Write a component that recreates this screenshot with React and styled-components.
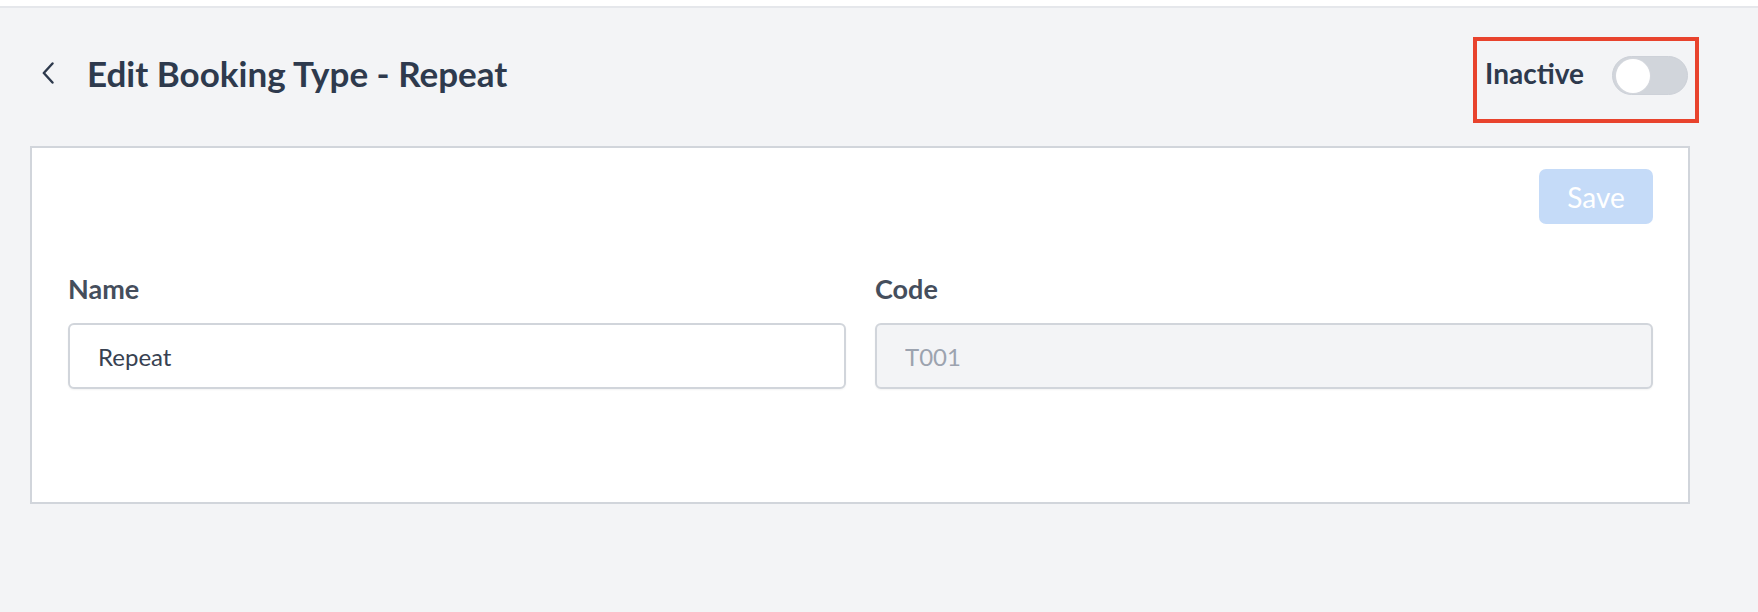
import React, { useState } from 'react';
import styled, { createGlobalStyle } from 'styled-components';

const GlobalStyle = createGlobalStyle`
  html, body {
    margin: 0;
    padding: 0;
    background: #f3f4f6;
    font-family: 'Lato', 'Noto Sans', sans-serif;
  }
  * {
    box-sizing: border-box;
  }
`;

const TopStrip = styled.div`
  height: 8px;
  background: #ffffff;
  border-bottom: 2px solid #e5e7eb;
`;

const Page = styled.div`
  padding: 0 68px 0 30px;
`;

const Header = styled.div`
  display: flex;
  justify-content: space-between;
  align-items: flex-start;
  margin-top: 29px;
  margin-right: -9px;
`;

const TitleGroup = styled.div`
  display: flex;
  align-items: center;
  height: 72px;
  padding-left: 12px;
  gap: 33px;
`;

const BackButton = styled.button`
  display: flex;
  align-items: center;
  padding: 0;
  border: 0;
  background: none;
  cursor: pointer;
  color: #2e3a4d;
`;

const Title = styled.h1`
  margin: 0;
  font-size: 35px;
  line-height: 40px;
  font-weight: 700;
  color: #2e3a4d;
`;

const StatusBox = styled.div`
  display: flex;
  align-items: flex-start;
  gap: 28px;
  padding: 15px 7px 24px 8px;
  border: 4px solid #e8432d;
`;

const StatusText = styled.span`
  font-size: 28px;
  line-height: 34px;
  font-weight: 700;
  color: #2e3a4d;
`;

const Track = styled.button`
  display: flex;
  align-items: center;
  width: 76px;
  height: 39px;
  padding: 0 0 0 3px;
  border: 1px solid #cdd1d8;
  border-radius: 20px;
  background: ${p => (p.on ? '#3b82f6' : '#d1d5db')};
  justify-content: ${p => (p.on ? 'flex-end' : 'flex-start')};
  cursor: pointer;
`;

const Knob = styled.span`
  width: 34px;
  height: 34px;
  border-radius: 50%;
  background: #ffffff;
  box-shadow: 0 0 0 1px #d4d7dd;
`;

const Card = styled.div`
  margin-top: 23px;
  background: #ffffff;
  border: 2px solid #d1d5db;
  padding: 21px 35px 113px 36px;
`;

const Actions = styled.div`
  display: flex;
  justify-content: flex-end;
`;

const SaveButton = styled.button`
  width: 114px;
  height: 55px;
  padding-top: 2px;
  border: 0;
  border-radius: 7px;
  background: #c5dbf8;
  color: #ffffff;
  font-family: 'Lato', 'Noto Sans', sans-serif;
  font-size: 28px;
  font-weight: 400;
  cursor: default;
`;

const Fields = styled.div`
  display: grid;
  grid-template-columns: 1fr 1fr;
  column-gap: 29px;
  margin-top: 49px;
`;

const Field = styled.div`
  display: flex;
  flex-direction: column;
  gap: 19px;
`;

const Label = styled.label`
  font-size: 27px;
  line-height: 31px;
  font-weight: 700;
  color: #454e5c;
`;

const Input = styled.input`
  height: 66px;
  width: 100%;
  padding: 0 28px;
  border: 2px solid #d1d5db;
  border-radius: 6px;
  background: ${p => (p.disabled ? '#f3f4f6' : '#ffffff')};
  color: ${p => (p.disabled ? '#9ca3af' : '#374151')};
  font-family: 'Lato', 'Noto Sans', sans-serif;
  font-size: 24px;
  box-shadow: 0 1px 2px rgba(0, 0, 0, 0.05);
  outline: none;
`;

function ChevronLeft() {
  return (
    <svg width="12" height="22" viewBox="0 0 12 22" fill="none">
      <polyline points="10.5,1.5 1.8,11 10.5,20.5" stroke="currentColor" strokeWidth="2.4" strokeLinecap="round" strokeLinejoin="round" />
    </svg>
  );
}

export default function App() {
  const [active, setActive] = useState(false);
  const [name, setName] = useState('Repeat');

  return (
    <>
      <GlobalStyle />
      <TopStrip />
      <Page>
        <Header>
          <TitleGroup>
            <BackButton aria-label="Back">
              <ChevronLeft />
            </BackButton>
            <Title>Edit Booking Type - Repeat</Title>
          </TitleGroup>
          <StatusBox>
            <StatusText>{active ? 'Active' : 'Inactive'}</StatusText>
            <Track on={active ? 1 : 0} onClick={() => setActive(!active)}>
              <Knob />
            </Track>
          </StatusBox>
        </Header>

        <Card>
          <Actions>
            <SaveButton disabled>Save</SaveButton>
          </Actions>
          <Fields>
            <Field>
              <Label>Name</Label>
              <Input value={name} onChange={e => setName(e.target.value)} />
            </Field>
            <Field>
              <Label>Code</Label>
              <Input value="T001" disabled readOnly />
            </Field>
          </Fields>
        </Card>
      </Page>
    </>
  );
}
